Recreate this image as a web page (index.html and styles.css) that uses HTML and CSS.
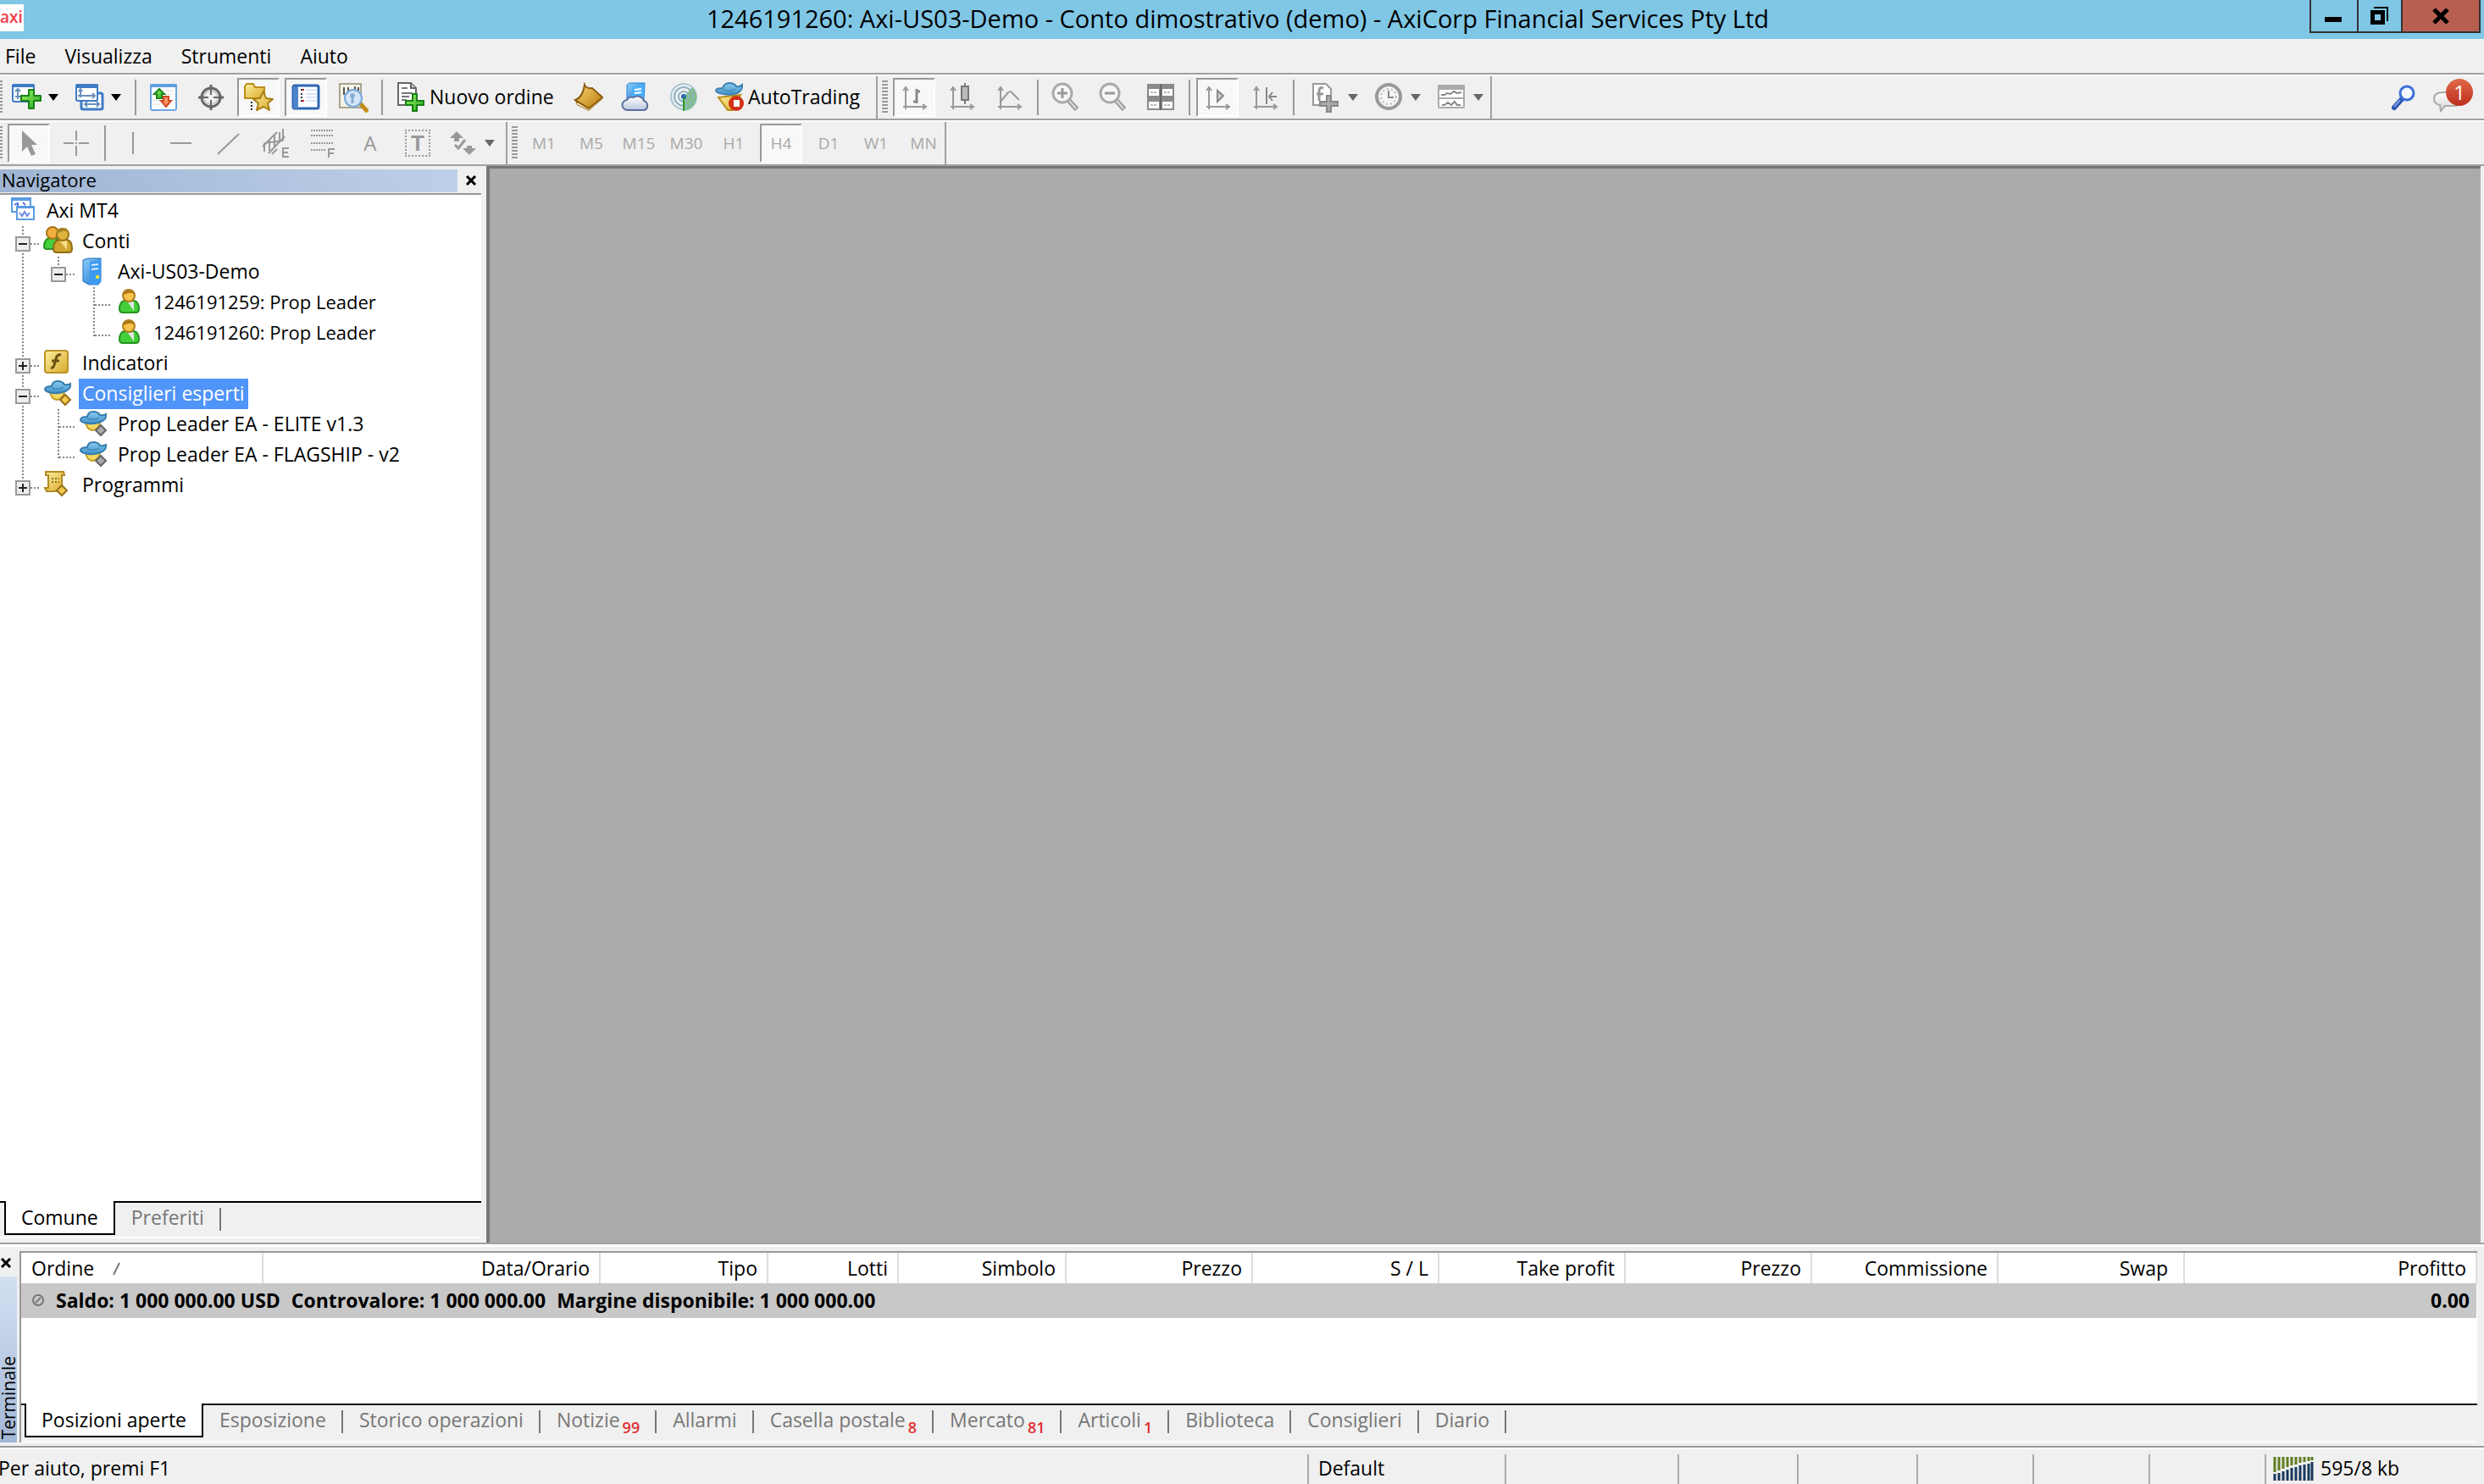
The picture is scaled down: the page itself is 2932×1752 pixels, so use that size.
FILE: index.html
```html
<!DOCTYPE html>
<html lang="it">
<head>
<meta charset="utf-8">
<title>1246191260: Axi-US03-Demo - Conto dimostrativo (demo)</title>
<link rel="stylesheet" href="styles.css">
</head>
<body>
<svg class="sprite" aria-hidden="true">
  <defs>
    <linearGradient id="green" x1="0" y1="0" x2="1" y2="1"><stop offset="0" stop-color="#a6f56a"/><stop offset="1" stop-color="#1fa51c"/></linearGradient>
    <linearGradient id="gold" x1="0" y1="0" x2="1" y2="1"><stop offset="0" stop-color="#fdf0a0"/><stop offset="1" stop-color="#d9a92c"/></linearGradient>
    <linearGradient id="amber" x1="0" y1="0" x2="1" y2="1"><stop offset="0" stop-color="#f8da70"/><stop offset="1" stop-color="#b9780f"/></linearGradient>
    <linearGradient id="blue" x1="0" y1="0" x2="1" y2="1"><stop offset="0" stop-color="#8fd0fb"/><stop offset="1" stop-color="#1a6fd0"/></linearGradient>
    <linearGradient id="hat" x1="0" y1="0" x2="0" y2="1"><stop offset="0" stop-color="#8ccdf0"/><stop offset="1" stop-color="#3f90c8"/></linearGradient>
    <linearGradient id="cloud" x1="0" y1="0" x2="0" y2="1"><stop offset="0" stop-color="#fff"/><stop offset="1" stop-color="#b9c6de"/></linearGradient>
    <linearGradient id="bubble" x1="0" y1="0" x2="0" y2="1"><stop offset="0" stop-color="#fff"/><stop offset="1" stop-color="#d4d4d4"/></linearGradient>
  </defs>
  <symbol id="i-newchart" viewBox="0 0 36 36">
    <rect x="2" y="3" width="25" height="20" rx="2" fill="#fff" stroke="#3f7cc4" stroke-width="2"/><path d="M1 6V4a2 2 0 0 1 2-2h23a2 2 0 0 1 2 2v2z" fill="#3f7cc4"/>
    <path d="M8 9v11M5 11l3-3 3 3M5 17h9M12 15l3 2-3 3" stroke="#6a8fbd" stroke-width="2" fill="none"/>
    <path d="M21 9h6v7h8v6h-8v9h-6v-9h-9v-6h9z" fill="url(#green)" stroke="#178016" stroke-width="2" stroke-linejoin="round"/>
  </symbol>
  <symbol id="i-windows" viewBox="0 0 36 36">
    <rect x="9" y="13" width="25" height="19" rx="2" fill="#fff" stroke="#3f7cc4" stroke-width="3"/><path d="M13 26h17M16 23l-3 3 3 3M27 23l3 3-3 3" stroke="#6a8fbd" stroke-width="2" fill="none"/>
    <rect x="3" y="3" width="25" height="19" rx="2" fill="#fff" stroke="#3f7cc4" stroke-width="2"/><path d="M2 7V4a2 2 0 0 1 2-2h23a2 2 0 0 1 2 2v3z" fill="#3f7cc4"/>
    <path d="M8 9v9M5 16h20M6 11l2-3 2 3M22 13l3 3-3 3" stroke="#6a8fbd" stroke-width="2" fill="none"/>
  </symbol>
  <symbol id="i-market" viewBox="0 0 36 36">
    <rect x="3" y="3" width="30" height="30" rx="2" fill="#fff" stroke="#6ba4e0" stroke-width="2"/><path d="M2 6V4a2 2 0 0 1 2-2h28a2 2 0 0 1 2 2v2z" fill="#5f9ee0"/>
    <path d="M20 10h10M20 14h10M6 22h9M6 26h9" stroke="#ccc" stroke-width="1" stroke-dasharray="2 1"/>
    <path d="M13 8l6 6h-3v5h-6v-5H7z" fill="url(#green)" stroke="#1e8a1c" stroke-width="2"/><path d="M18 17h6v5h3l-6 7-6-7h3z" fill="#f59468" stroke="#cf4a20" stroke-width="2"/>
  </symbol>
  <symbol id="i-cross" viewBox="0 0 36 36">
    <g fill="none" stroke="#666"><circle cx="18" cy="18" r="11" stroke-width="3"/><circle cx="18" cy="18" r="8" stroke="#ccc" stroke-width="2"/><path d="M18 8v7M18 21v7M8 18h7M21 18h7" stroke-width="2"/><path d="M18 3v6M18 27v6M3 18h6M27 18h6" stroke-width="3"/></g>
  </symbol>
  <symbol id="i-favorites" viewBox="0 0 36 36">
    <path d="M2 19V5l2-3h8l2 4h11v13z" fill="url(#gold)" stroke="#b98e1a" stroke-width="2"/><path d="M10 23v11" stroke="#222" stroke-width="2" stroke-dasharray="2 2"/>
    <path d="M25 11l3 8 8 1-6 5 2 8-7-4-8 4 2-8-6-5 8-1z" fill="url(#gold)" stroke="#a87f14" stroke-width="2" stroke-linejoin="round" transform="translate(-1 0)"/>
  </symbol>
  <symbol id="i-data" viewBox="0 0 36 36">
    <rect x="3" y="4" width="30" height="27" rx="2" fill="#fff" stroke="#2c66b4" stroke-width="3"/><path d="M3 5h6v26H3z" fill="#4d84ca"/>
    <path d="M12 9h2M12 14h2M12 18h2M12 22h2" stroke="#333" stroke-width="2"/><path d="M14 9h2M14 22h2" stroke="#e22" stroke-width="2"/><path d="M18 9h13M18 14h13M18 18h13M18 22h13" stroke="#b9cdf0"/>
  </symbol>
  <symbol id="i-tester" viewBox="0 0 36 36">
    <rect x="2" y="2" width="25" height="28" fill="#f6f3e8" stroke="#a9a48e" stroke-width="2"/><path d="M7 6v9M12 6v8M20 5v8M24 6v6" stroke="#555" stroke-width="2"/>
    <path d="M26 25l9 10" stroke="#c08c1c" stroke-width="5"/><circle cx="18" cy="19" r="10" fill="#cfe6fa" fill-opacity=".9" stroke="#78a8dc" stroke-width="2"/><path d="M17 13v12M14 16h6" stroke="#8aaccc" stroke-width="3"/>
  </symbol>
  <symbol id="i-order" viewBox="0 0 36 36">
    <path d="M3 2h15l6 6v20H3z" fill="#fff" stroke="#666" stroke-width="2"/><path d="M18 2v6h6" fill="#ccc" stroke="#666" stroke-width="2"/><path d="M7 8h7M7 14h13M7 18h9M7 22h6" stroke="#777" stroke-width="2"/>
    <path d="M20 15h5v8h8v5h-8v7h-5v-7h-8v-5h8z" fill="url(#green)" stroke="#178016" stroke-width="2"/>
  </symbol>
  <symbol id="i-book" viewBox="0 0 36 36">
    <path d="M2 22l2 5 14 7 16-14-1-5z" fill="#8d5c10"/><path d="M4 25l14 7 15-13" stroke="#f4e2a8" stroke-width="2" fill="none"/><path d="M13 3q2 5 9 4l12 11-16 13L2 21q9-3 11-18z" fill="url(#amber)" stroke="#8d5c10" stroke-width="2"/>
  </symbol>
  <symbol id="i-vps" viewBox="0 0 36 36">
    <path d="M7 3l3-2h18l-1 20H7z" fill="url(#blue)" stroke="#1c86de"/><path d="M13 6l14-3v18H13z" fill="#4eb2fa"/><path d="M16 9l8-1M16 13l8-1" stroke="#fff" stroke-width="2"/>
    <path d="M8 33a6 6 0 0 1-1-12 6 6 0 0 1 8-3 8 8 0 0 1 12 4 6 6 0 0 1 1 11z" fill="url(#cloud)" stroke="#5b6f9c" stroke-width="2"/>
  </symbol>
  <symbol id="i-signal" viewBox="0 0 36 36">
    <path d="M18 18v16a16 16 0 0 0 10-28z" fill="#59b356" fill-opacity=".75"/><g fill="none" stroke="#8fb2c6" stroke-width="2"><circle cx="18" cy="17" r="15" stroke-opacity=".7"/><circle cx="18" cy="17" r="11"/><circle cx="18" cy="17" r="6"/></g><circle cx="18" cy="17" r="3" fill="#2a64b8"/><path d="M18 18v16" stroke="#2f9a2c" stroke-width="2"/>
  </symbol>
  <symbol id="i-auto" viewBox="0 0 36 36">
    <path d="M5 19l26-3-9 18h-6z" fill="url(#gold)" stroke="#b98e1a" stroke-width="2"/><path d="M2 11q0-3 8-3 2-6 8-6t8 4q4 1 7-2 1 7-6 10-8 3-16 1-8-1-9-4z" fill="url(#hat)" stroke="#3e83b0" stroke-width="2"/><path d="M10 10q8 3 15-1" stroke="#3e83b0" fill="none"/>
    <circle cx="26" cy="26" r="9" fill="#d23116"/><rect x="23" y="22" width="7" height="8" fill="#fff"/>
  </symbol>
  <symbol id="i-axes" viewBox="0 0 36 36"><path d="M8 6v26M5 29h26M5 10l3-4 3 4M28 26l4 3-4 3" fill="none" stroke="#999" stroke-width="2"/></symbol>
  <symbol id="i-bars" viewBox="0 0 36 36"><use href="#i-axes"/><path d="M21 8v17M21 11h4M17 23h4" stroke="#888" stroke-width="3"/></symbol>
  <symbol id="i-candles" viewBox="0 0 36 36"><use href="#i-axes"/><path d="M22 1v25" stroke="#777" stroke-width="2"/><rect x="18" y="5" width="8" height="16" fill="#bbb" stroke="#777" stroke-width="2"/></symbol>
  <symbol id="i-line" viewBox="0 0 36 36"><use href="#i-axes"/><path d="M8 23l9-11q3-2 5 1l8 8" fill="none" stroke="#999" stroke-width="2"/></symbol>
  <symbol id="i-zoomin" viewBox="0 0 36 36"><path d="M21 21l10 11" stroke="#999" stroke-width="6"/><path d="M22 22l8 9" stroke="#ddd" stroke-width="2"/><circle cx="14" cy="13" r="11" fill="#f6f6f6" stroke="#aaa" stroke-width="3"/><path d="M8 13h12M14 7v12" stroke="#999" stroke-width="3"/></symbol>
  <symbol id="i-zoomout" viewBox="0 0 36 36"><path d="M21 21l10 11" stroke="#999" stroke-width="6"/><path d="M22 22l8 9" stroke="#ddd" stroke-width="2"/><circle cx="14" cy="13" r="11" fill="#f6f6f6" stroke="#aaa" stroke-width="3"/><path d="M8 13h12" stroke="#999" stroke-width="3"/></symbol>
  <symbol id="i-tile" viewBox="0 0 36 36"><path d="M2 2h32v31H2z" fill="#8a8a8a"/><path d="M4 8h12v8H4zM20 8h12v8H20zM4 23h12v8H4zM20 23h12v8H20z" fill="#fff"/><path d="M6 12h8M22 12h8M6 27h8M22 27h8" stroke="#bbb" stroke-width="2" stroke-dasharray="3 1"/><path d="M18 2v31" stroke="#666" stroke-width="2"/></symbol>
  <symbol id="i-scroll" viewBox="0 0 36 36"><use href="#i-axes"/><path d="M18 10v13l7-7z" fill="#ccc" stroke="#888" stroke-width="2"/></symbol>
  <symbol id="i-shift" viewBox="0 0 36 36"><use href="#i-axes"/><path d="M20 6v20M23 17h9M27 12l-4 5 4 5" fill="none" stroke="#888" stroke-width="2"/></symbol>
  <symbol id="i-indicator" viewBox="0 0 36 36"><path d="M3 2h15l6 6v19H3z" fill="#fff" stroke="#999" stroke-width="2"/><path d="M15 7q-5-2-5 4v11M7 14h8" stroke="#999" stroke-width="3" fill="none"/><path d="M19 16h5v7h8v5h-8v7h-5v-7h-8v-5h8z" fill="#aaa" stroke="#888" stroke-width="2"/></symbol>
  <symbol id="i-clock" viewBox="0 0 36 36"><circle cx="18" cy="17" r="14" fill="#f4f4f4" stroke="#999" stroke-width="4"/><circle cx="18" cy="17" r="9" fill="none" stroke="#bbb" stroke-width="2" stroke-dasharray="2 3"/><path d="M18 10v8h6" stroke="#888" stroke-width="2" fill="none"/></symbol>
  <symbol id="i-template" viewBox="0 0 36 36"><rect x="3" y="4" width="30" height="26" rx="1" fill="#fff" stroke="#aaa" stroke-width="2"/><path d="M2 3h32v6H2z" fill="#aaa"/><path d="M3 19h30" stroke="#aaa" stroke-width="2"/><path d="M6 15h4l3-2 4 1 4-3 4 2 5-1M7 27h3l4-3 4 3 4-4 3 4h4" stroke="#888" stroke-width="2" fill="none"/></symbol>
  <symbol id="i-cursor" viewBox="0 0 36 36"><path d="M10 3v25l6-6 5 11 5-2-5-11h7z" fill="#999"/></symbol>
  <symbol id="i-plus" viewBox="0 0 36 36"><path d="M18 3v12M18 21v12M3 18h12M21 18h12M17 18h2" stroke="#999" stroke-width="2"/></symbol>
  <symbol id="i-vline" viewBox="0 0 36 36"><path d="M18 5v26" stroke="#999" stroke-width="2"/></symbol>
  <symbol id="i-hline" viewBox="0 0 36 36"><path d="M6 18h25" stroke="#999" stroke-width="2"/></symbol>
  <symbol id="i-trend" viewBox="0 0 36 36"><path d="M6 31L31 7" stroke="#999" stroke-width="2"/></symbol>
  <symbol id="i-channel" viewBox="0 0 36 36"><path d="M3 22L20 5M10 30L29 10M5 18v10M11 13v14M17 8v14M23 5v12M27 1v14M5 18l22-3M14 31l6-6" stroke="#999" stroke-width="2"/><path d="M34 24h-7v10h7M27 29h6" stroke="#999" stroke-width="2" fill="none"/></symbol>
  <symbol id="i-fibo" viewBox="0 0 36 36"><path d="M4 3h27M4 9h27M4 18h27M4 26h18" stroke="#999" stroke-width="2" stroke-dasharray="2 1"/><path d="M32 25h-7v10M25 30h6" stroke="#999" stroke-width="2" fill="none"/></symbol>
  <symbol id="i-arrows" viewBox="0 0 36 36"><path d="M11 4l8 8h-5v4H8v-4H3zM26 32l8-8h-5v-3h-6v3h-5z" fill="#999"/><path d="M9 20l4 4 8-10" stroke="#999" stroke-width="3" fill="none"/></symbol>
  <symbol id="i-root" viewBox="0 0 36 36"><rect x="1" y="3" width="22" height="16" fill="#fff" stroke="#5a9be0" stroke-width="2"/><path d="M0 2h24v4H0z" fill="#5a9be0"/><path d="M4 11l3-2M8 8v4M14 8l3 3" stroke="#5a78e0" stroke-width="2"/><rect x="7" y="13" width="20" height="15" fill="#fff" stroke="#5a9be0" stroke-width="2"/><path d="M6 12h22v3H6z" fill="#5a9be0"/><path d="M10 20l3 4 3-5 3 5 3-4" stroke="#6a86e4" stroke-width="2" fill="none"/></symbol>
  <symbol id="i-person" viewBox="0 0 36 36"><g transform="translate(4 2)"><path d="M2 24q0-9 6-10h11q6 1 6 10 0 4-4 4H6q-4 0-4-4z" fill="#43cf3a" stroke="#279322" stroke-width="2"/><path d="M12 16l7-1v11z" fill="#e4e4e4"/><circle cx="13" cy="8" r="7" fill="#f8c44c" stroke="#b07d18" stroke-width="2"/><path d="M6 7q0-6 7-6t7 6q-4-3-7-2t-7 2z" fill="#b07a1c"/></g></symbol>
  <symbol id="i-people" viewBox="0 0 36 36"><path d="M1 24q0-9 7-10h8v13H4q-3 0-3-3z" fill="#43cf3a" stroke="#279322" stroke-width="2"/><circle cx="11" cy="8" r="7" fill="#f0b040" stroke="#a87418" stroke-width="2"/><path d="M12 27q0-10 7-11h9q6 1 6 11 0 4-4 4H16q-4 0-4-4z" fill="#d0a530" stroke="#8f6c14" stroke-width="2"/><path d="M20 18l8-1v11z" fill="#f8e08a"/><circle cx="23" cy="10" r="7" fill="#dbb440" stroke="#9a7414" stroke-width="2"/><path d="M16 8q0-6 7-6t7 6q-4-3-7-2t-7 2z" fill="#a88220"/></symbol>
  <symbol id="i-server" viewBox="0 0 36 36"><path d="M5 4l6-2h15v27l-3 4H12l-7-4z" fill="url(#blue)" stroke="#1a66b8"/><path d="M13 6l13-2v26l-3 3H13z" fill="#3c9af0"/><path d="M15 10l8-1M15 15l8-1" stroke="#d9eeff" stroke-width="2"/><rect x="20" y="22" width="4" height="4" fill="#e8e040"/></symbol>
  <symbol id="i-func" viewBox="0 0 36 36"><rect x="2" y="3" width="27" height="26" rx="3" fill="url(#gold)" stroke="#bb9428" stroke-width="2"/><path d="M21 8q-5-1-6 5l-2 7q-1 4-4 3M10 15h9" stroke="#6b5210" stroke-width="3" fill="none"/></symbol>
  <symbol id="i-hatbase" viewBox="0 0 36 36"><path d="M8 15h17q-1 9-9 10-7-1-8-10z" fill="#f4d860" stroke="#c39a22" stroke-width="2"/><path d="M2 13q0-4 8-4 1-6 7-6t8 4q4 1 7-1 1 6-6 9-8 3-15 2-8-1-9-4z" fill="url(#hat)" stroke="#357cae" stroke-width="2"/><path d="M10 11q7 3 14-1" stroke="#357cae" fill="none"/></symbol>
  <symbol id="i-expert" viewBox="0 0 36 36"><use href="#i-hatbase"/><path d="M26 19l6 6-6 6-6-6z" fill="#f1ca4e" stroke="#96711a" stroke-width="2"/></symbol>
  <symbol id="i-ea" viewBox="0 0 36 36"><use href="#i-hatbase"/><path d="M26 19l6 6-6 6-6-6z" fill="#aaa" stroke="#666" stroke-width="2"/></symbol>
  <symbol id="i-script" viewBox="0 0 36 36"><path d="M3 2h21l1 4h-3v14l2 5H4l-2-4h4V6H3z" fill="url(#gold)" stroke="#b08a20" stroke-width="2"/><path d="M10 10h9M10 14h9" stroke="#8b701c" stroke-width="2" stroke-dasharray="2 2"/><path d="M22 18l6 6-6 6-6-6z" fill="#f1ca4e" stroke="#96711a" stroke-width="2"/></symbol>
  <symbol id="i-x" viewBox="0 0 14 12"><path d="M2 1l10 10M12 1L2 11" stroke="#000" stroke-width="3"/></symbol>
</svg>

<header class="titlebar">
  <span class="logo">axi</span>
  <h1 class="title">1246191260: Axi-US03-Demo - Conto dimostrativo (demo) - AxiCorp Financial Services Pty Ltd</h1>
  <div class="winbtns">
    <button class="winbtn min" aria-label="Riduci a icona"><svg width="54" height="36" viewBox="0 0 54 36"><path d="M16 19h20v6H16z"/></svg></button>
    <button class="winbtn max" aria-label="Ripristina"><svg width="50" height="36" viewBox="0 0 50 36"><path d="M14 11h17v17H14zm5 5v7h7v-7z" fill-rule="evenodd"/><path d="M18 8h16v16" fill="none" stroke="#000" stroke-width="2"/></svg></button>
    <button class="winbtn close" aria-label="Chiudi"><svg width="20" height="18" viewBox="0 0 20 18"><path d="M2 1l16 16M18 1L2 17" stroke="#000" stroke-width="5"/></svg></button>
  </div>
</header>

<nav class="menubar"><button>File</button><button>Visualizza</button><button>Strumenti</button><button>Aiuto</button></nav>

<div class="toolrow">
  <div class="group">
    <span class="grip edge"></span>
    <div class="drops">
      <button class="drop" aria-label="Nuovo grafico"><svg class="ic"><use href="#i-newchart"/></svg><i class="arrow"></i></button>
      <button class="drop" aria-label="Profili"><svg class="ic"><use href="#i-windows"/></svg><i class="arrow"></i></button>
    </div>
    <span class="sep"></span>
    <button class="tool" aria-label="Market Watch"><svg class="ic"><use href="#i-market"/></svg></button>
    <button class="tool" aria-label="Finestra dati"><svg class="ic"><use href="#i-cross"/></svg></button>
    <button class="tool on" aria-label="Navigatore"><svg class="ic"><use href="#i-favorites"/></svg></button>
    <button class="tool on" aria-label="Terminale"><svg class="ic"><use href="#i-data"/></svg></button>
    <button class="tool" aria-label="Tester di strategia"><svg class="ic"><use href="#i-tester"/></svg></button>
    <span class="sep"></span>
    <button class="labelled order"><svg class="ic"><use href="#i-order"/></svg>Nuovo ordine</button>
    <button class="tool" aria-label="MetaEditor"><svg class="ic"><use href="#i-book"/></svg></button>
    <button class="tool" aria-label="Hosting virtuale"><svg class="ic"><use href="#i-vps"/></svg></button>
    <button class="tool" aria-label="Segnali"><svg class="ic"><use href="#i-signal"/></svg></button>
    <button class="labelled auto"><svg class="ic"><use href="#i-auto"/></svg>AutoTrading</button>
  </div>
  <div class="group closed">
    <span class="grip"></span>
    <button class="tool on" aria-label="Grafico a barre"><svg class="ic"><use href="#i-bars"/></svg></button>
    <button class="tool" aria-label="Candele"><svg class="ic"><use href="#i-candles"/></svg></button>
    <button class="tool" aria-label="Linea"><svg class="ic"><use href="#i-line"/></svg></button>
    <span class="sep"></span>
    <button class="tool" aria-label="Ingrandisci"><svg class="ic"><use href="#i-zoomin"/></svg></button>
    <button class="tool" aria-label="Riduci"><svg class="ic"><use href="#i-zoomout"/></svg></button>
    <button class="tool" aria-label="Affianca"><svg class="ic"><use href="#i-tile"/></svg></button>
    <span class="sep"></span>
    <button class="tool on" aria-label="Scorrimento automatico"><svg class="ic"><use href="#i-scroll"/></svg></button>
    <button class="tool" aria-label="Spostamento grafico"><svg class="ic"><use href="#i-shift"/></svg></button>
    <span class="sep"></span>
    <div class="drops chartdrops">
      <button class="drop off" aria-label="Indicatori"><svg class="ic"><use href="#i-indicator"/></svg><i class="arrow"></i></button>
      <button class="drop off" aria-label="Periodi"><svg class="ic"><use href="#i-clock"/></svg><i class="arrow"></i></button>
      <button class="drop off" aria-label="Modelli"><svg class="ic"><use href="#i-template"/></svg><i class="arrow"></i></button>
    </div>
  </div>
  <div class="right">
    <button class="tool" aria-label="Cerca"><svg class="ic" viewBox="0 0 36 36"><path d="M15 20L6 30" stroke="#2c55b4" stroke-width="6" stroke-linecap="round"/><path d="M13 21l-7 8" stroke="#7d9be0" stroke-width="2"/><circle cx="21" cy="13" r="8" fill="#f4f8ff" stroke="#3f6fd8" stroke-width="3"/></svg></button>
    <button class="chat" aria-label="Messaggi"><svg width="36" height="36" viewBox="0 0 36 36"><path d="M13 12h12q9 0 9 8t-9 8H15l-5 6-1-7q-7-1-7-7 0-8 11-8z" fill="url(#bubble)" stroke="#aaa" stroke-width="2"/></svg><span class="badge">1</span></button>
  </div>
</div>

<div class="toolrow">
  <div class="group second">
    <span class="grip edge"></span>
    <button class="tool on" aria-label="Cursore"><svg class="ic"><use href="#i-cursor"/></svg></button>
    <button class="tool" aria-label="Mirino"><svg class="ic"><use href="#i-plus"/></svg></button>
    <span class="sep"></span>
    <button class="tool" aria-label="Linea verticale"><svg class="ic"><use href="#i-vline"/></svg></button>
    <button class="tool" aria-label="Linea orizzontale"><svg class="ic"><use href="#i-hline"/></svg></button>
    <button class="tool" aria-label="Linea di tendenza"><svg class="ic"><use href="#i-trend"/></svg></button>
    <button class="tool" aria-label="Canale"><svg class="ic"><use href="#i-channel"/></svg></button>
    <button class="tool" aria-label="Fibonacci"><svg class="ic"><use href="#i-fibo"/></svg></button>
    <button class="tool glyph">A</button>
    <button class="tool glyph boxed">T</button>
    <button class="drop off" aria-label="Frecce"><svg class="ic"><use href="#i-arrows"/></svg><i class="arrow"></i></button>
  </div>
  <div class="group closed frames">
    <span class="grip"></span>
    <button class="tool">M1</button><button class="tool">M5</button><button class="tool">M15</button><button class="tool">M30</button><button class="tool">H1</button><button class="tool on">H4</button><button class="tool">D1</button><button class="tool">W1</button><button class="tool">MN</button>
  </div>
</div>

<main class="work">
  <aside class="navigator">
    <div class="panelhead"><h2>Navigatore</h2><button aria-label="Chiudi navigatore"><svg width="14" height="12"><use href="#i-x"/></svg></button></div>
    <div class="tree" role="tree">
      <div class="row" role="treeitem"><svg class="ti root"><use href="#i-root"/></svg><span>Axi MT4</span></div>
      <div class="row" role="treeitem"><b class="g tee"><i class="box minus"></i></b><svg class="ti"><use href="#i-people"/></svg><span>Conti</span></div>
      <div class="row" role="treeitem"><b class="g line"></b><b class="g elbow"><i class="box minus"></i></b><svg class="ti"><use href="#i-server"/></svg><span>Axi-US03-Demo</span></div>
      <div class="row account" role="treeitem"><b class="g line"></b><b class="g"></b><b class="g tee"></b><svg class="ti"><use href="#i-person"/></svg><span>1246191259: Prop Leader</span></div>
      <div class="row account" role="treeitem"><b class="g line"></b><b class="g"></b><b class="g elbow"></b><svg class="ti"><use href="#i-person"/></svg><span>1246191260: Prop Leader</span></div>
      <div class="row" role="treeitem"><b class="g tee"><i class="box plus"></i></b><svg class="ti"><use href="#i-func"/></svg><span>Indicatori</span></div>
      <div class="row" role="treeitem"><b class="g tee"><i class="box minus"></i></b><svg class="ti"><use href="#i-expert"/></svg><span class="selected">Consiglieri esperti</span></div>
      <div class="row" role="treeitem"><b class="g line"></b><b class="g tee"></b><svg class="ti"><use href="#i-ea"/></svg><span>Prop Leader EA - ELITE v1.3</span></div>
      <div class="row" role="treeitem"><b class="g line"></b><b class="g elbow"></b><svg class="ti"><use href="#i-ea"/></svg><span>Prop Leader EA - FLAGSHIP - v2</span></div>
      <div class="row" role="treeitem"><b class="g elbow"><i class="box plus"></i></b><svg class="ti"><use href="#i-script"/></svg><span>Programmi</span></div>
    </div>
    <div class="tabs"><button class="active">Comune</button><button>Preferiti</button></div>
  </aside>
  <section class="canvas" aria-label="Area grafici"></section>
</main>

<section class="terminal">
  <div class="side"><button aria-label="Chiudi terminale"><svg width="14" height="12"><use href="#i-x"/></svg></button><h2><span>Terminale</span></h2></div>
  <div class="sheet">
    <table>
      <colgroup><col class="c-order"><col class="c-date"><col class="c-type"><col class="c-lots"><col class="c-symbol"><col class="c-price"><col class="c-price"><col class="c-price"><col class="c-price"><col class="c-price"><col class="c-price"><col></colgroup>
      <thead><tr><th>Ordine<svg width="10" height="16" viewBox="0 0 10 16"><path d="M1 15L8 1" stroke="#777" stroke-width="2"/></svg></th><th>Data/Orario</th><th>Tipo</th><th>Lotti</th><th>Simbolo</th><th>Prezzo</th><th>S / L</th><th>Take profit</th><th>Prezzo</th><th>Commissione</th><th class="swap">Swap</th><th>Profitto</th></tr></thead>
      <tbody><tr><td colspan="11"><div class="balance"><svg width="16" height="16" viewBox="0 0 16 16"><circle cx="8" cy="8" r="6" fill="#ccc" stroke="#777" stroke-width="2"/><path d="M5 11l6-6" stroke="#777" stroke-width="2"/></svg><span>Saldo: 1 000 000.00 USD</span><span>Controvalore: 1 000 000.00</span><span>Margine disponibile: 1 000 000.00</span></div></td><td>0.00</td></tr></tbody>
    </table>
    <div class="tabs"><button class="active">Posizioni aperte</button><button>Esposizione</button><button>Storico operazioni</button><button>Notizie<sub>99</sub></button><button>Allarmi</button><button>Casella postale<sub>8</sub></button><button>Mercato<sub>81</sub></button><button>Articoli<sub>1</sub></button><button>Biblioteca</button><button>Consiglieri</button><button>Diario</button></div>
  </div>
</section>

<footer class="status">
  <span class="help">Per aiuto, premi F1</span>
  <span class="cell profile">Default</span><span class="cell s1"></span><span class="cell s2"></span><span class="cell s2"></span><span class="cell s3"></span><span class="cell s3"></span><span class="cell s3"></span>
  <span class="cell net"><svg width="48" height="28" viewBox="0 0 48 28"><path d="M2 0v18M7 0v16M12 0v14M17 0v12M22 0v10M27 0v9M32 0v7M37 0v6M42 0v5M46 0v4" stroke="#5f7d20" stroke-width="3"/><path d="M2 20v8M7 19v9M12 17v11M17 15v13M22 13v15M27 12v16M32 10v18M37 9v19M42 8v20M46 6v22" stroke="#17395c" stroke-width="3"/></svg>595/8 kb</span>
</footer>
</body>
</html>
```
FILE: styles.css
```css
* { box-sizing: border-box; }
body {
  margin: 0;
  min-height: 100vh;
  display: flex;
  flex-direction: column;
  background: #f0f0f0;
  color: #000;
  font: 23px/30px "Open Sans", "Noto Sans", sans-serif;
  overflow-x: hidden;
}
button { margin: 0; padding: 0; border: 0; background: none; font: inherit; color: inherit; white-space: nowrap; }
h1, h2 { margin: 0; font-weight: 400; }
svg { display: block; flex: none; }
.sprite { position: absolute; width: 0; height: 0; }

.titlebar { display: flex; align-items: flex-start; height: 46px; background: #80c7e6; }
.logo { width: 28px; height: 32px; margin-top: 5px; background: #fff; color: #ee3b4c; font-size: 19px; font-weight: 600; line-height: 30px; overflow: hidden; }
.title { flex: 1; padding-left: 168px; text-align: center; font-size: 29px; line-height: 44px; }
.winbtns { display: flex; margin-right: 4px; border: 2px solid #333; border-top: 0; }
.winbtn { display: flex; align-items: center; justify-content: center; height: 37px; border-right: 2px solid #333; }
.winbtn.max { width: 52px; }
.winbtn.close { width: 90px; border: 0; background: #b85f52; }

.menubar { display: flex; gap: 34px; height: 40px; padding: 3px 6px; line-height: 32px; }

.toolrow { display: flex; height: 54px; border-top: 2px solid #a0a0a0; box-shadow: inset 0 2px #fff; padding-top: 2px; }
.group { display: flex; align-items: center; gap: 6px; border-right: 2px solid #a0a0a0; }
.closed { padding-left: 5px; }
.drops { display: flex; margin-right: -6px; }
.chartdrops { margin-left: 8px; }
.grip { width: 7px; height: 40px; background: repeating-linear-gradient(#999 0 2px, transparent 2px 4px); }
.edge { width: 3px; }
.sep { width: 2px; height: 42px; margin: 0 1px 0 2px; background: #999; }
.ic { width: 36px; height: 36px; }
.tool { display: flex; align-items: center; justify-content: center; width: 50px; height: 46px; border: 2px solid transparent; flex: none; }
.on { border-color: #999 #fff #fff #999; background: repeating-conic-gradient(#fff 0 25%, #f2f2f2 0 50%) 0 0 / 4px 4px; }
.drop { display: flex; align-items: center; gap: 8px; width: 74px; padding-left: 4px; }
.arrow { width: 12px; height: 8px; background: #000; clip-path: polygon(0 0, 100% 0, 50% 100%); }
.off .arrow { background: #666; }
.labelled { display: flex; align-items: center; gap: 4px; height: 46px; padding: 0 0 2px 8px; }
.order { width: 205px; }
.auto { width: 196px; padding-left: 5px; }
.second { width: 599px; }
.glyph { color: #999; font-size: 24px; }
.boxed { font: bold 26px "Liberation Sans", sans-serif; width: 30px; height: 32px; margin: 0 10px; border: 2px dotted #999; }
.frames .tool { color: #a8a8a8; font-size: 19px; }
.right { display: flex; align-items: center; margin-left: auto; padding-right: 23px; gap: 8px; }
.chat { position: relative; width: 38px; }
.badge { position: absolute; left: 16px; top: -4px; width: 32px; height: 32px; border-radius: 50%; background: linear-gradient(#e0694a, #bf2f1d); color: #fff; font-size: 24px; line-height: 31px; }

.work { flex: 1; display: flex; border-top: 2px solid #a0a0a0; border-bottom: 2px solid #a0a0a0; padding-right: 4px; }
.navigator { width: 574px; display: flex; flex-direction: column; padding: 3px 6px 5px 0; flex: none; }
.panelhead { display: flex; align-items: center; height: 28px; }
.panelhead h2 { width: 540px; height: 27px; padding-left: 2px; font-size: 22px; line-height: 25px; background: linear-gradient(90deg, #9fb5d3, #bdd0e9); }
.panelhead button { margin-left: 9px; }
.tree { flex: 1; margin-top: 1px; padding: 1px 0 0 6px; border-top: 2px solid #999; background: #fff; }
.row { display: flex; height: 36px; }
.row span { padding: 0 4px; line-height: 34px; white-space: nowrap; }
.account { font-size: 22px; }
.row .selected { background: #4f94f8; color: #fff; }
.ti { width: 36px; height: 36px; margin: 0 6px 0 3px; }
.ti.root { margin: 0 2px 0 7px; }
.g { position: relative; width: 42px; height: 36px; }
.g::before { content: ""; position: absolute; left: 20px; top: 0; width: 2px; height: 36px; }
.g::after { content: ""; position: absolute; left: 22px; top: 20px; width: 20px; height: 2px; }
.line::before, .tee::before, .elbow::before { background: repeating-linear-gradient(#888 0 2px, transparent 2px 4px); }
.elbow::before { height: 22px; }
.tee::after, .elbow::after { background: repeating-linear-gradient(90deg, #888 0 2px, transparent 2px 4px); }
.box { position: absolute; z-index: 1; left: 12px; top: 12px; width: 18px; height: 18px; border: 2px solid #999; background: linear-gradient(#222, #222) center / 10px 2px no-repeat, #eee; }
.plus { background: linear-gradient(#222, #222) center / 10px 2px no-repeat, linear-gradient(#222, #222) center / 2px 10px no-repeat, #eee; }
.canvas { flex: 1; border: 3px solid #777; border-width: 3px 0 0 4px; background: #ababab; }

.tabs { display: flex; height: 44px; border-bottom: 2px solid #fff; background: linear-gradient(#000, #000) 0 0 / 100% 2px no-repeat; color: #777; }
.tabs button { position: relative; height: 38px; padding: 0 19px; line-height: 35px; }
.tabs button:not(.active)::after { content: ""; position: absolute; right: -1px; top: 8px; width: 2px; height: 27px; background: #777; }
.tabs button + button { margin-right: 1px; }
.tabs .active { height: 40px; margin-left: 5px; padding: 0 18px; border: 2px solid #000; border-top: 0; background: #fff; color: #000; }

.terminal { display: flex; height: 238px; padding: 8px 8px 4px 0; box-shadow: inset 0 3px #fff; }
.side { display: flex; flex-direction: column; width: 20px; margin-right: 3px; }
.side button { display: flex; height: 30px; padding-top: 8px; }
.side h2 { flex: 1; display: flex; align-items: flex-start; background: linear-gradient(#d3e0f2, #a3b8d6); }
.side span { writing-mode: vertical-rl; transform: rotate(180deg); line-height: 20px; margin-top: auto; padding-top: 4px; font-size: 21px; }
.sheet { flex: 1; display: flex; flex-direction: column; border: 2px solid #999; border-width: 2px 0 0 2px; background: #fff; }
table { width: 100%; table-layout: fixed; border-collapse: collapse; }
.c-order { width: 285px; } .c-date { width: 398px; } .c-type { width: 198px; } .c-lots { width: 154px; } .c-symbol { width: 198px; } .c-price { width: 220px; }
th { height: 36px; padding: 0 11px 0 12px; border-right: 2px solid #ddd; font-weight: 400; text-align: right; white-space: nowrap; }
th:first-child { text-align: left; }
th svg { display: inline-block; margin-left: 22px; }
.swap { padding-right: 18px; }
tbody td { height: 41px; padding: 0 8px 2px 12px; background: #c8c8c8; font-weight: 700; text-align: right; }
.balance { display: flex; align-items: center; gap: 13px; }
.sheet .tabs { margin-top: auto; height: 46px; background-color: #f0f0f0; }
.sheet .tabs .active { margin-left: 4px; }
sub { color: #e03030; font-size: 18px; font-weight: 600; line-height: 0; margin-left: 3px; vertical-align: -7px; }

.status { display: flex; height: 45px; border-top: 2px solid #999; box-shadow: inset 0 2px #fff; padding-top: 8px; line-height: 33px; }
.help { flex: 1; margin-left: -2px; }
.cell { border-left: 2px solid #aaa; }
.profile { width: 233px; padding-left: 11px; }
.s1 { width: 204px; }
.s2 { width: 141px; }
.s3 { width: 137px; }
.net { display: flex; gap: 8px; width: 259px; padding-left: 8px; }
.net svg { margin-top: 3px; }
```
